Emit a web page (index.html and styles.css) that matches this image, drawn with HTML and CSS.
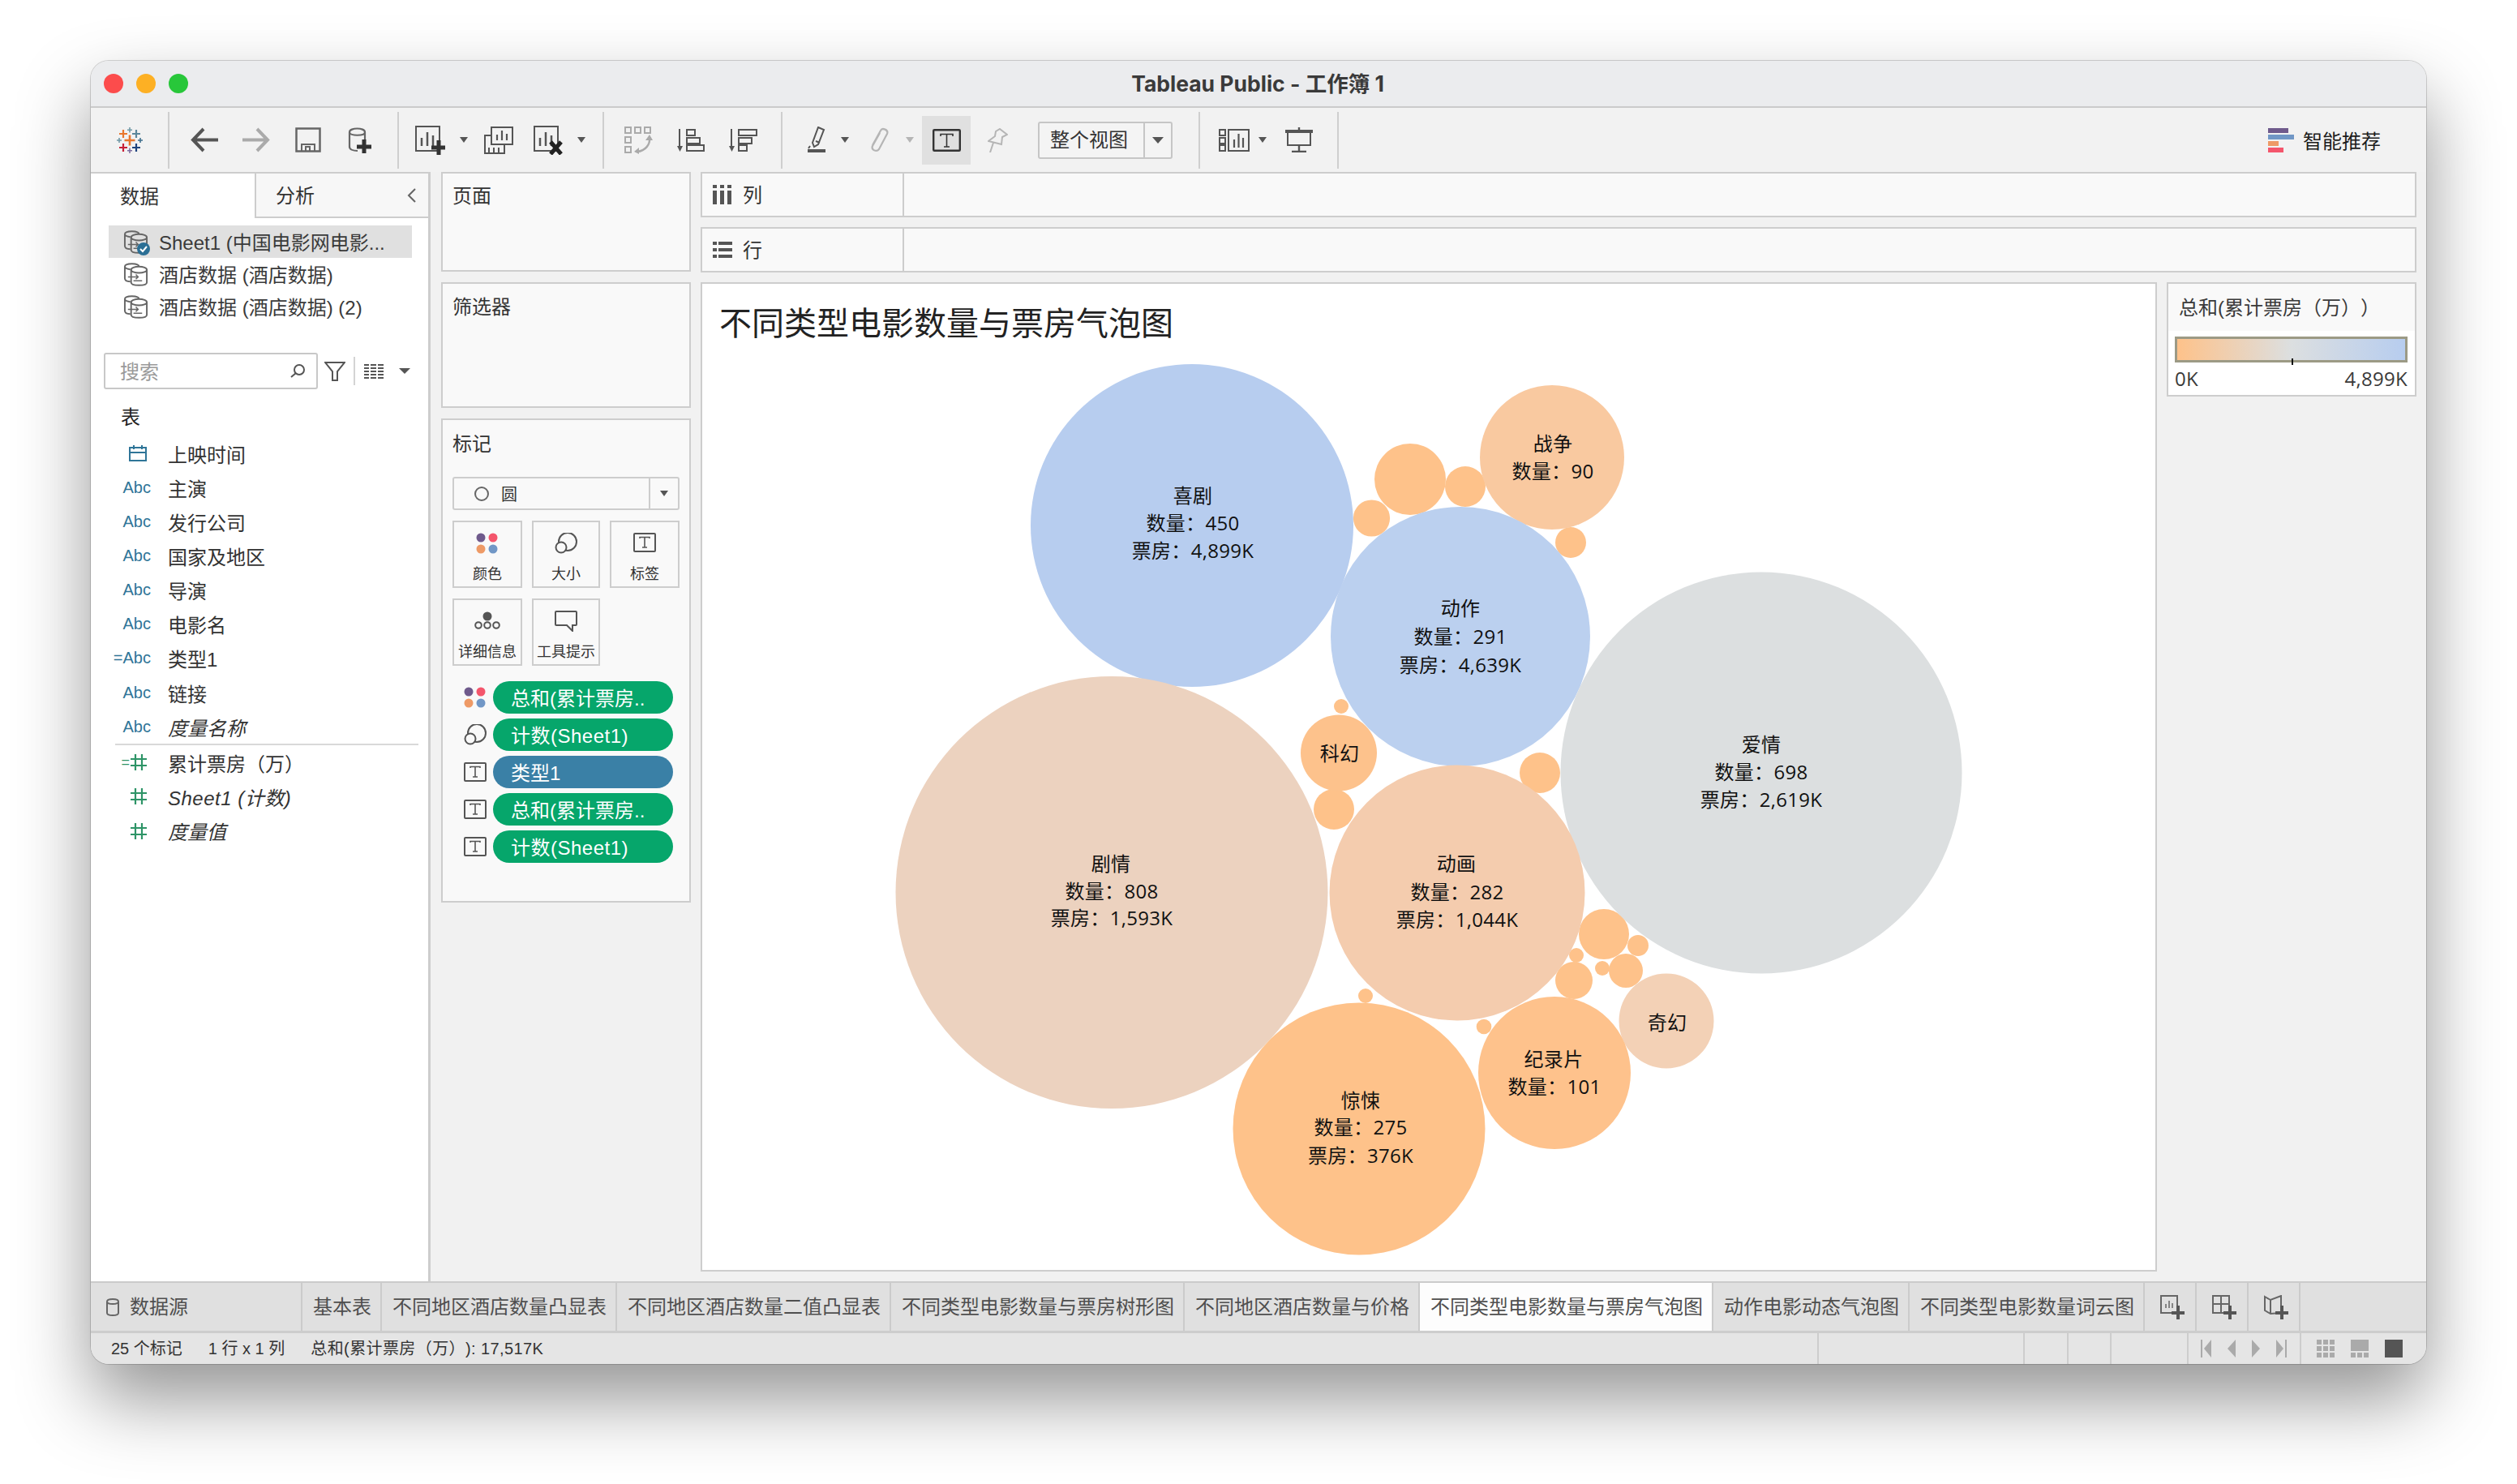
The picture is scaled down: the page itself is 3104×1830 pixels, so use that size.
FILE: index.html
```html
<!DOCTYPE html>
<html lang="zh-CN">
<head>
<meta charset="utf-8">
<title>Tableau Public - 工作簿 1</title>
<link rel="stylesheet" href="styles.css">
</head>
<body>
<svg class="sprite" aria-hidden="true">
  <defs>
    <symbol id="i-dots" viewBox="0 0 28 26">
      <circle cx="6" cy="6" r="5.5" fill="#6f5a8c"/><circle cx="21" cy="6" r="5.5" fill="#f4566c"/>
      <circle cx="6" cy="20" r="5.5" fill="#ee9a66"/><circle cx="21" cy="20" r="5.5" fill="#7197c6"/>
    </symbol>
    <symbol id="i-size" viewBox="0 0 28 26">
      <circle cx="16" cy="11" r="11" fill="none" stroke="#555" stroke-width="2"/>
      <circle cx="8" cy="18" r="6.5" fill="#f9f9f9" stroke="#555" stroke-width="2"/>
    </symbol>
    <symbol id="i-t" viewBox="0 0 28 24">
      <rect x="1" y="1" width="26" height="22" rx="1" fill="none" stroke="#555" stroke-width="2"/>
      <path d="M8 7V5.500H20V7M14 5.500V18M11 18H17" fill="none" stroke="#555" stroke-width="1.600"/>
    </symbol>
    <symbol id="i-db" viewBox="0 0 32 32">
      <path d="M2 6C2 1 20 1 20 6M2 6V21C2 24 5 25 9 25M2 6C2 8 5 9 9 9.500" fill="none" stroke="#666" stroke-width="2"/>
      <ellipse cx="20" cy="10" rx="10" ry="4" fill="none" stroke="#666" stroke-width="2"/>
      <path d="M10 10V26C10 31 30 31 30 26V10" fill="none" stroke="#666" stroke-width="2"/>
      <path d="M6 19H19M16 16L19 19L16 22M24 24H13" fill="none" stroke="#666" stroke-width="1.500"/>
    </symbol>
    <symbol id="i-sheet" viewBox="0 0 37 36">
      <rect x="1" y="1" width="29" height="30" fill="none" stroke="#555" stroke-width="2"/>
      <path d="M8 25V15M15 25V8M22 25V12" stroke="#555" stroke-width="2.500"/>
    </symbol>
    <symbol id="i-hash" viewBox="0 0 20 20">
      <path d="M0 6H20M0 14H20M6 0V20M14 0V20" stroke="#2e9467" stroke-width="2.200"/>
    </symbol>
  </defs>
</svg>

<div class="window">
  <header class="titlebar">
    <div class="lights"><span class="light red"></span><span class="light amber"></span><span class="light green"></span></div>
    <div class="title">Tableau Public - 工作簿 1</div>
    <div></div>
  </header>

  <nav class="toolbar">
    <svg class="m31" width="33" height="32" viewBox="0 0 33 32" fill="none">
      <path d="M17 9.500V22.500M10.500 16H23.500" stroke="#e8762c" stroke-width="2.600"/>
      <path d="M9 3V13M4 8H14" stroke="#e8762c" stroke-width="2.200"/>
      <path d="M25 3V13M20 8H30" stroke="#5b879b" stroke-width="2.200"/>
      <path d="M9 20V30M4 25H14" stroke="#c72037" stroke-width="2.200"/>
      <path d="M25 20V30M20 25H30" stroke="#1f447e" stroke-width="2.200"/>
      <path d="M17 0V6.500M14 3.200H20" stroke="#7199a6" stroke-width="1.600"/>
      <path d="M4 13V19M1 16H7" stroke="#7199a6" stroke-width="1.600"/>
      <path d="M30 13V19M27 16H33" stroke="#3f6f8c" stroke-width="1.600"/>
      <path d="M17 25.500V32M14 28.800H20" stroke="#7e6fa0" stroke-width="1.600"/>
    </svg>
    <span class="sep m31"></span>
    <svg class="m26" width="34" height="31" viewBox="0 0 34 31" fill="none" stroke="#555" stroke-width="4"><path d="M16 2L3 15.500L16 29M3 15.500H34"/></svg>
    <svg class="m30" width="34" height="31" viewBox="0 0 34 31" fill="none" stroke="#aaa" stroke-width="4"><path d="M18 2L31 15.500L18 29M31 15.500H0"/></svg>
    <svg class="m31" width="32" height="31" viewBox="0 0 32 31" fill="none" stroke="#666" stroke-width="2.500"><rect x="1.500" y="1.500" width="29" height="28"/><path d="M8 29V21H24V29M13 29V24H18V29" stroke-width="2"/></svg>
    <svg class="m33" width="29" height="33" viewBox="0 0 29 33" fill="none"><path d="M2 7C2 1 21 1 21 7C21 12 2 12 2 7V25C2 28 6 30 12 30M21 7V17" stroke="#666" stroke-width="2.200"/><path d="M20 16V33M11 25H29" stroke="#333" stroke-width="5"/></svg>
    <span class="sep m32"></span>
    <svg class="m20" width="37" height="36" viewBox="0 0 37 36"><use href="#i-sheet" width="37" height="36"/><path d="M29 18V36M20 27H37" stroke="#333" stroke-width="5"/></svg>
    <span class="caret m18"></span>
    <svg class="m20" width="36" height="34" viewBox="0 0 36 34" fill="none" stroke="#555" stroke-width="2"><rect x="9" y="1" width="26" height="21" fill="#f2f2f2"/><path d="M16 17V10M22 17V5M28 17V9" stroke-width="2.200"/><path d="M9 11H1V33H25V22M6 32V26M12 32V26M18 32V26" /></svg>
    <svg class="m25" width="36" height="36" viewBox="0 0 36 36"><use href="#i-sheet" width="37" height="36"/><path d="M21 20L34 35M34 20L21 35" stroke="#222" stroke-width="5"/></svg>
    <span class="caret m18"></span>
    <span class="sep m21"></span>
    <svg class="m25" width="35" height="34" viewBox="0 0 35 34" fill="none" stroke="#aaa" stroke-width="2"><rect x="1" y="1" width="7" height="7"/><rect x="13" y="1" width="7" height="7"/><rect x="25" y="1" width="7" height="7"/><rect x="1" y="13" width="7" height="7"/><rect x="1" y="25" width="7" height="7"/><path d="M31 14C32 22 26 30 16 31" stroke-width="2.500"/><path d="M26 17L31 10L35 17ZM18 26L12 31L18 34Z" fill="#aaa" stroke="none"/></svg>
    <svg class="m30" width="34" height="28" viewBox="0 0 34 28" fill="none" stroke="#555" stroke-width="2"><path d="M3 0V22" /><path d="M0 21H7L3.500 28Z" fill="#555" stroke="none"/><rect x="12" y="1" width="10" height="7"/><rect x="12" y="11" width="16" height="7"/><rect x="12" y="20" width="21" height="7"/></svg>
    <svg class="m30" width="35" height="28" viewBox="0 0 35 28" fill="none" stroke="#555" stroke-width="2"><path d="M3 0V22"/><path d="M0 21H7L3.500 28Z" fill="#555" stroke="none"/><rect x="12" y="1" width="22" height="7"/><rect x="12" y="11" width="16" height="7"/><rect x="12" y="20" width="10" height="7"/></svg>
    <span class="sep m29"></span>
    <svg class="m31" width="22" height="33" viewBox="0 0 22 33" fill="none" stroke="#555" stroke-width="2"><path d="M13 1L20 4L13 22L8 25L6 20ZM10 18L15 20M3 24L1 27"/><path d="M0 30H22" stroke-width="4"/></svg>
    <span class="caret m19"></span>
    <svg class="m25" width="25" height="31" viewBox="0 0 25 31" fill="none" stroke="#b5b5b5" stroke-width="2.200"><path d="M4 22L14 4C16 0 24 3 22 8L12 27C9 31 2 28 4 23L13 7"/></svg>
    <span class="caret light-caret m20"></span>
    <span class="t-btn m10"><svg width="35" height="28" viewBox="0 0 35 28" fill="none" stroke="#333"><rect x="1.200" y="1.200" width="32.600" height="25.600" rx="1" stroke-width="2.400"/><path d="M10 9V6.500H25V9M17.500 6.500V22M14 22H21" stroke-width="1.600"/></svg></span>
    <svg class="m21" width="25" height="30" viewBox="0 0 25 30" fill="none" stroke="#b5b5b5" stroke-width="2"><path d="M15 1L24 8L18 11L17 20L1 16L9 10L10 4ZM7 18L3 30"/></svg>
    <div class="fit m37"><span class="fit-text">整个视图</span><span class="fit-arrow"><span class="caret big"></span></span></div>
    <span class="sep m32"></span>
    <svg class="m23" width="38" height="28" viewBox="0 0 38 28" fill="none" stroke="#555" stroke-width="2"><rect x="1" y="1" width="7" height="7"/><rect x="1" y="11" width="7" height="7"/><rect x="1" y="20" width="7" height="7"/><rect x="12" y="1" width="25" height="26"/><path d="M19 23V13M24.500 23V6M30 23V11" stroke-width="2.200"/></svg>
    <span class="caret m11"></span>
    <svg class="m23" width="34" height="31" viewBox="0 0 34 31" fill="none" stroke="#555"><path d="M0 5H34" stroke-width="4"/><path d="M3 6V22H31V6" stroke-width="2"/><path d="M17 0V4M17 22V30M8 30H26" stroke-width="2.400"/></svg>
    <span class="sep m30"></span>
    <div class="smart">
      <svg width="32" height="30" viewBox="0 0 32 30"><rect width="25" height="6" fill="#6f5a8c"/><rect y="8" width="32" height="6" fill="#7197c6"/><rect y="16" width="13" height="6" fill="#ee9a66"/><rect y="24" width="19" height="6" fill="#f4566c"/></svg>
      <span>智能推荐</span>
    </div>
  </nav>

  <div class="workspace">
    <aside class="side">
      <div class="side-tabs">
        <div class="side-tab active">数据</div>
        <div class="side-tab">分析<svg class="chev" width="12" height="18" viewBox="0 0 12 18" fill="none" stroke="#666" stroke-width="2"><path d="M10 1L2 9L10 17"/></svg></div>
      </div>
      <ul class="sources">
        <li class="source selected">
          <span class="db-wrap"><svg width="31" height="31"><use href="#i-db" width="31" height="31"/></svg>
          <svg class="badge" width="16" height="16" viewBox="0 0 16 16"><circle cx="8" cy="8" r="8" fill="#2b6f95"/><path d="M4 8L7 11L12 5" fill="none" stroke="#fff" stroke-width="2"/></svg></span>
          <span class="source-text">Sheet1 (中国电影网电影...</span>
        </li>
        <li class="source"><span class="db-wrap"><svg width="31" height="31"><use href="#i-db" width="31" height="31"/></svg></span><span class="source-text">酒店数据 (酒店数据)</span></li>
        <li class="source"><span class="db-wrap"><svg width="31" height="31"><use href="#i-db" width="31" height="31"/></svg></span><span class="source-text">酒店数据 (酒店数据) (2)</span></li>
      </ul>
      <div class="searchrow">
        <div class="search"><span class="search-text">搜索</span><svg width="18" height="17" viewBox="0 0 18 17" fill="none" stroke="#555" stroke-width="2"><circle cx="11" cy="7" r="6"/><path d="M7 11L1 16"/></svg></div>
        <svg class="funnel" width="26" height="24" viewBox="0 0 26 24" fill="none" stroke="#555" stroke-width="2"><path d="M1 1H25L16 12V23H10V12Z"/></svg>
        <span class="mini-sep"></span>
        <svg class="listicon" width="24" height="18" viewBox="0 0 24 18" stroke="#555" stroke-width="1.800"><path d="M0 1H6M8 1H15M17 1H24M0 5H6M8 5H15M17 5H24M0 9H6M8 9H15M17 9H24M0 13H6M8 13H15M17 13H24M0 17H6M8 17H15M17 17H24"/></svg>
        <span class="caret side-caret"></span>
      </div>
      <div class="group-head">表</div>
      <ul class="fields">
        <li class="field"><span class="ficon"><svg class="fsvg" width="22" height="20" viewBox="0 0 22 20" fill="none" stroke="#2f7598" stroke-width="2"><rect x="1" y="3" width="20" height="16"/><path d="M1 9H21M6 0V5M16 0V5" /></svg></span><span>上映时间</span></li>
        <li class="field"><span class="ficon abc">Abc</span><span>主演</span></li>
        <li class="field"><span class="ficon abc">Abc</span><span>发行公司</span></li>
        <li class="field"><span class="ficon abc">Abc</span><span>国家及地区</span></li>
        <li class="field"><span class="ficon abc">Abc</span><span>导演</span></li>
        <li class="field"><span class="ficon abc">Abc</span><span>电影名</span></li>
        <li class="field"><span class="ficon abc">=Abc</span><span>类型1</span></li>
        <li class="field"><span class="ficon abc">Abc</span><span>链接</span></li>
        <li class="field"><span class="ficon abc">Abc</span><em>度量名称</em></li>
      </ul>
      <ul class="fields measures">
        <li class="field"><span class="ficon"><span class="eq">=</span><svg class="fsvg" width="20" height="20"><use href="#i-hash"/></svg></span><span>累计票房（万）</span></li>
        <li class="field"><span class="ficon"><svg class="fsvg" width="20" height="20"><use href="#i-hash"/></svg></span><em class="wide">Sheet1 (计数)</em></li>
        <li class="field"><span class="ficon"><svg class="fsvg" width="20" height="20"><use href="#i-hash"/></svg></span><em>度量值</em></li>
      </ul>
    </aside>

    <div class="cards">
      <section class="card pages"><h3>页面</h3></section>
      <section class="card filters"><h3>筛选器</h3></section>
      <section class="card marks">
        <h3>标记</h3>
        <div class="marktype">
          <span class="marktype-main"><span class="ring"></span>圆</span>
          <span class="marktype-arrow"><span class="caret"></span></span>
        </div>
        <div class="markbtns">
          <div class="markbtn"><svg width="28" height="26"><use href="#i-dots"/></svg><span>颜色</span></div>
          <div class="markbtn"><svg width="28" height="26"><use href="#i-size"/></svg><span>大小</span></div>
          <div class="markbtn"><svg width="28" height="26"><use href="#i-t" height="24"/></svg><span>标签</span></div>
          <div class="markbtn"><svg width="32" height="26" viewBox="0 0 32 26" fill="none" stroke="#555" stroke-width="2"><circle cx="16" cy="7" r="4.500" fill="#555"/><circle cx="5" cy="18" r="3.800"/><circle cx="16" cy="18" r="3.800"/><circle cx="27" cy="18" r="3.800"/></svg><span>详细信息</span></div>
          <div class="markbtn"><svg width="28" height="26" viewBox="0 0 28 26" fill="none" stroke="#555" stroke-width="2"><path d="M2 1H26Q27 1 27 2V17Q27 18 26 18H22V25L15 18H2Q1 18 1 17V2Q1 1 2 1Z"/></svg><span>工具提示</span></div>
        </div>
        <ul class="pills">
          <li class="pillrow"><svg width="28" height="26"><use href="#i-dots"/></svg><span class="pill">总和(累计票房..</span></li>
          <li class="pillrow"><svg width="28" height="26"><use href="#i-size"/></svg><span class="pill wide">计数(Sheet1)</span></li>
          <li class="pillrow"><svg width="28" height="24"><use href="#i-t"/></svg><span class="pill blue">类型1</span></li>
          <li class="pillrow"><svg width="28" height="24"><use href="#i-t"/></svg><span class="pill">总和(累计票房..</span></li>
          <li class="pillrow"><svg width="28" height="24"><use href="#i-t"/></svg><span class="pill wide">计数(Sheet1)</span></li>
        </ul>
      </section>
    </div>

    <main class="main">
      <div class="shelf">
        <div class="shelf-label"><svg width="24" height="24" viewBox="0 0 24 24" fill="#555"><rect x="0" y="0" width="5" height="4"/><rect x="9" y="0" width="5" height="4"/><rect x="18" y="0" width="5" height="4"/><rect x="0" y="7" width="5" height="17"/><rect x="9" y="7" width="5" height="17"/><rect x="18" y="7" width="5" height="17"/></svg><span class="shelf-text">列</span></div>
      </div>
      <div class="shelf">
        <div class="shelf-label"><svg width="24" height="20" viewBox="0 0 24 20" fill="#555"><rect y="0" width="5" height="4"/><rect y="8" width="5" height="4"/><rect y="16" width="5" height="4"/><rect x="7" y="0" width="17" height="4"/><rect x="7" y="8" width="17" height="4"/><rect x="7" y="16" width="17" height="4"/></svg><span class="shelf-text">行</span></div>
      </div>
      <div class="view-row">
        <section class="viz">
          <svg class="chart" viewBox="866 350 1792 1216">
            <text class="chart-title" x="887" y="413">不同类型电影数量与票房气泡图</text>
            <circle cx="1739" cy="591" r="44" fill="#fec28a"/>
            <circle cx="1807" cy="600" r="25" fill="#fec28a"/>
            <circle cx="1691.500" cy="639" r="22.600" fill="#fec28a"/>
            <circle cx="1937" cy="669" r="19" fill="#fec28a"/>
            <circle cx="1654" cy="871" r="9" fill="#fec28a"/>
            <circle cx="1645" cy="998" r="25" fill="#fec28a"/>
            <circle cx="1899" cy="953" r="25" fill="#fec28a"/>
            <circle cx="1978" cy="1152" r="31" fill="#fec28a"/>
            <circle cx="2020" cy="1166" r="13" fill="#fec28a"/>
            <circle cx="2005" cy="1197" r="21" fill="#fec28a"/>
            <circle cx="1976" cy="1194" r="9" fill="#fec28a"/>
            <circle cx="1944" cy="1178" r="9" fill="#fec28a"/>
            <circle cx="1941" cy="1209" r="23" fill="#fec28a"/>
            <circle cx="1830" cy="1266" r="9.300" fill="#fec28a"/>
            <circle cx="1684" cy="1228" r="9" fill="#fec28a"/>
            <circle cx="1470" cy="648" r="199" fill="#b7cdef"/>
            <circle cx="1914" cy="564" r="89" fill="#f9c9a0"/>
            <circle cx="1801" cy="785" r="160" fill="#bbd0ef"/>
            <circle cx="2172" cy="953" r="247.500" fill="#dcdfe0"/>
            <circle cx="1371" cy="1100.500" r="266.500" fill="#ecd2bf"/>
            <circle cx="1797" cy="1101" r="157.500" fill="#f4ccae"/>
            <circle cx="1651" cy="928.500" r="47" fill="#fdc28c"/>
            <circle cx="2055" cy="1259" r="58.500" fill="#f3d1b6"/>
            <circle cx="1917" cy="1323" r="94" fill="#fec28c"/>
            <circle cx="1676" cy="1392" r="155.500" fill="#fec28a"/>
            <g class="labels">
              <text x="1471" y="620">喜剧</text><text x="1471" y="654">数量：450</text><text x="1471" y="688">票房：4,899K</text>
              <text x="1801" y="759">动作</text><text x="1801" y="794">数量：291</text><text x="1801" y="829">票房：4,639K</text>
              <text x="2172" y="927">爱情</text><text x="2172" y="961">数量：698</text><text x="2172" y="995">票房：2,619K</text>
              <text x="1370" y="1074">剧情</text><text x="1371" y="1108">数量：808</text><text x="1371" y="1141">票房：1,593K</text>
              <text x="1796" y="1074">动画</text><text x="1797" y="1109">数量：282</text><text x="1797" y="1143">票房：1,044K</text>
              <text x="1678" y="1366">惊悚</text><text x="1678" y="1399">数量：275</text><text x="1678" y="1434">票房：376K</text>
              <text x="1915" y="556">战争</text><text x="1915" y="590">数量：90</text>
              <text x="1652" y="938">科幻</text>
              <text x="2056" y="1270">奇幻</text>
              <text x="1916" y="1315">纪录片</text><text x="1917" y="1349">数量：101</text>
            </g>
          </svg>
        </section>
        <aside class="legend">
          <div class="legend-head">总和(累计票房（万））</div>
          <div class="legend-body">
            <div class="ramp"></div>
            <div class="ramp-labels"><span>0K</span><span>4,899K</span></div>
          </div>
        </aside>
      </div>
    </main>
  </div>

  <div class="tabs">
    <div class="tab tab-source"><svg width="16" height="24" viewBox="0 0 16 24" fill="none" stroke="#666" stroke-width="2"><path d="M1 5C1 1 15 1 15 5V19C15 23 1 23 1 19ZM1 5C1 9 15 9 15 5"/></svg>数据源</div>
    <div class="tab">基本表</div>
    <div class="tab">不同地区酒店数量凸显表</div>
    <div class="tab">不同地区酒店数量二值凸显表</div>
    <div class="tab">不同类型电影数量与票房树形图</div>
    <div class="tab">不同地区酒店数量与价格</div>
    <div class="tab active">不同类型电影数量与票房气泡图</div>
    <div class="tab">动作电影动态气泡图</div>
    <div class="tab">不同类型电影数量词云图</div>
    <div class="tab tab-icon"><svg width="30" height="30" viewBox="0 0 30 30" fill="none" stroke="#666" stroke-width="2"><rect x="1" y="1" width="20" height="21"/><path d="M7 16V11M11 16V7M15 16V10" stroke-width="1.500"/><path d="M22 13V30M14 22H30" stroke="#555" stroke-width="4"/></svg></div>
    <div class="tab tab-icon"><svg width="30" height="30" viewBox="0 0 30 30" fill="none" stroke="#666" stroke-width="2"><path d="M1 1H21V22H1ZM11 1V22M1 11H21"/><path d="M22 13V30M14 22H30" stroke="#555" stroke-width="4"/></svg></div>
    <div class="tab tab-icon"><svg width="30" height="30" viewBox="0 0 30 30" fill="none" stroke="#666" stroke-width="2"><path d="M1 2L8 6L21 1V22L8 23L1 19ZM8 6V23"/><path d="M22 13V30M14 22H30" stroke="#555" stroke-width="4"/></svg></div>
  </div>

  <footer class="status">
    <span class="st-text">25 个标记</span>
    <span class="st-text">1 行 x 1 列</span>
    <span class="st-text st-sum">总和(累计票房（万）): 17,517K</span>
    <div class="st-cells">
      <span class="st-cell w-254"></span><span class="st-cell w-54"></span><span class="st-cell w-53"></span><span class="st-cell w-95"></span>
      <span class="st-cell st-nav">
        <svg width="13" height="22" viewBox="0 0 13 22" fill="#aaa"><rect width="2" height="22"/><path d="M13 0L4 11L13 22Z"/></svg>
        <svg width="10" height="22" viewBox="0 0 10 22" fill="#aaa"><path d="M10 0L0 11L10 22Z"/></svg>
        <svg width="10" height="22" viewBox="0 0 10 22" fill="#aaa"><path d="M0 0L10 11L0 22Z"/></svg>
        <svg width="13" height="22" viewBox="0 0 13 22" fill="#aaa"><rect x="11" width="2" height="22"/><path d="M0 0L9 11L0 22Z"/></svg>
      </span>
      <span class="st-views">
        <svg width="22" height="22" viewBox="0 0 22 22" fill="#aaa"><rect width="6" height="6"/><rect x="8" width="6" height="6"/><rect x="16" width="6" height="6"/><rect y="8" width="6" height="6"/><rect x="8" y="8" width="6" height="6"/><rect x="16" y="8" width="6" height="6"/><rect y="16" width="6" height="6"/><rect x="8" y="16" width="6" height="6"/><rect x="16" y="16" width="6" height="6"/></svg>
        <svg width="22" height="22" viewBox="0 0 22 22" fill="#aaa"><rect width="22" height="14"/><rect y="16" width="6" height="6"/><rect x="8" y="16" width="6" height="6"/><rect x="16" y="16" width="6" height="6"/></svg>
        <svg width="22" height="22" viewBox="0 0 22 22" fill="#555"><rect width="22" height="22"/></svg>
      </span>
    </div>
  </footer>
</div>
</body>
</html>
```

FILE: styles.css
```css
* { box-sizing: border-box; }
html, body { margin: 0; padding: 0; }
body {
  width: 3104px;
  height: 1830px;
  padding: 75px 112px;
  background: #ffffff;
  overflow: hidden;
  font-family: "Liberation Sans", "Noto Sans CJK SC", sans-serif;
  font-size: 24px;
  color: #333;
  text-spacing-trim: space-all;
}
ul { list-style: none; margin: 0; padding: 0; }
h3 { margin: 0; font-size: 24px; font-weight: 400; line-height: 30px; }
em { font-style: italic; }
.sprite { position: absolute; width: 0; height: 0; }
svg { display: block; flex: none; }
.wide { letter-spacing: .5px; }

.window {
  width: 2880px;
  height: 1607px;
  display: flex;
  flex-direction: column;
  background: #f1f1f1;
  border-radius: 22px;
  overflow: hidden;
  box-shadow: 0 0 0 1px rgba(0,0,0,.16), 0 44px 90px rgba(0,0,0,.42);
}

/* title bar */
.titlebar {
  height: 58px;
  flex: none;
  display: grid;
  grid-template-columns: 1fr auto 1fr;
  align-items: center;
  background: #ebecee;
  border-bottom: 2px solid #cbcbcb;
}
.lights { display: flex; gap: 16px; padding-left: 16px; }
.light { width: 24px; height: 24px; border-radius: 50%; }
.red { background: #fc4c4c; }
.amber { background: #fdb024; }
.green { background: #28c73a; }
.title { padding-right: 2px; font-family: "Inter", "Noto Sans CJK SC", sans-serif; font-size: 26.5px; font-weight: 700; color: #3a3a3a; line-height: 30px; }

/* toolbar */
.toolbar {
  height: 79px;
  flex: none;
  display: flex;
  align-items: center;
  background: #f2f2f2;
  color: #333;
}
.sep { width: 2px; height: 70px; background: #cfcfcf; flex: none; }
.caret { width: 0; height: 0; border-left: 5px solid transparent; border-right: 5px solid transparent; border-top: 7px solid #555; flex: none; }
.caret.light-caret { border-top-color: #b5b5b5; }
.caret.big { border-left-width: 7px; border-right-width: 7px; border-top-width: 8px; }
.m10 { margin-left: 10px; } .m11 { margin-left: 11px; } .m18 { margin-left: 18px; } .m19 { margin-left: 19px; }
.m20 { margin-left: 20px; } .m21 { margin-left: 21px; } .m23 { margin-left: 23px; }
.m25 { margin-left: 25px; } .m26 { margin-left: 26px; } .m29 { margin-left: 29px; }
.m30 { margin-left: 30px; } .m31 { margin-left: 31px; } .m32 { margin-left: 32px; }
.m33 { margin-left: 33px; } .m37 { margin-left: 37px; }
.t-btn { width: 60px; height: 60px; background: #e0e0e0; display: flex; align-items: center; justify-content: center; flex: none; }
.fit {
  width: 166px; height: 46px; flex: none;
  display: flex; align-items: stretch;
  background: #f4f4f4; border: 2px solid #c6c6c6; border-radius: 3px;
}
.fit-text { width: 128px; padding-left: 13px; line-height: 42px; }
.fit-arrow { flex: 1; border-left: 2px solid #c6c6c6; display: flex; align-items: center; justify-content: center; }
.smart { margin-left: auto; margin-right: 56px; display: flex; align-items: center; gap: 11px; color: #1c1c1c; }

/* workspace */
.workspace { flex: 1; min-height: 0; display: flex; }
.side {
  width: 419px; flex: none;
  background: #fff;
  border-top: 2px solid #cdcdcd;
  border-right: 3px solid #cdcdcd;
}
.side-tabs { display: flex; height: 55px; }
.side-tab { display: flex; align-items: center; padding-bottom: 3px; }
.side-tab.active { width: 202px; padding-left: 36px; }
.side-tab:not(.active) {
  flex: 1; position: relative; padding-left: 24px;
  background: #f7f7f7;
  border-left: 2px solid #cdcdcd;
  border-bottom: 2px solid #cdcdcd;
}
.chev { position: absolute; right: 14px; top: 18px; }
.sources { padding: 9px 20px 0 22px; }
.source { height: 40px; display: flex; align-items: center; color: #3a3a3a; }
.source.selected { background: #e0e0e0; }
.source-text { padding-bottom: 2px; }
.db-wrap { width: 62px; padding-left: 18px; position: relative; flex: none; }
.badge { position: absolute; left: 35px; top: 16px; }
.searchrow { display: flex; align-items: center; height: 45px; margin: 37px 0 0 16px; }
.search {
  width: 264px; height: 45px;
  display: flex; align-items: center; justify-content: space-between;
  padding: 0 14px 0 18px;
  border: 2px solid #c8c8c8; border-radius: 3px;
  color: #9a9a9a;
}
.search-text { padding-bottom: 3px; }
.funnel { margin-left: 8px; }
.mini-sep { width: 2px; height: 35px; background: #d4d4d4; margin-left: 10px; }
.listicon { margin-left: 11px; }
.side-caret { margin-left: 19px; border-left-width: 7px; border-right-width: 7px; }
.group-head { height: 52px; padding: 0 0 2px 37px; display: flex; align-items: flex-end; color: #222; line-height: 30px; }
.fields { margin-top: 6px; }
.fields.measures { margin: 0 12px 0 30px; border-top: 2px solid #d9d9d9; }
.field { height: 42.15px; display: flex; align-items: center; color: #333; }
.measures .ficon { margin-left: -30px; }
.ficon { width: 95px; padding-right: 21px; display: flex; justify-content: flex-end; align-items: center; flex: none; }
.abc { font-size: 20px; color: #2f7598; }
.fsvg { margin-right: 5px; }
.eq { color: #2e9467; font-size: 18px; margin-right: 1px; }

/* cards */
.cards { width: 308px; flex: none; margin-left: 13px; display: flex; flex-direction: column; gap: 13px; }
.card { background: #f9f9f9; border: 2px solid #cdcdcd; padding: 0 12px; flex: none; }
.card h3 { color: #333; }
.pages { height: 123px; padding-top: 13px; }
.filters { height: 155px; padding-top: 14px; }
.marks { height: 597px; padding-top: 15px; }
.marktype {
  height: 41px; margin-top: 25px;
  display: flex; align-items: stretch;
  border: 2px solid #cdcdcd; border-radius: 3px;
}
.marktype-main { flex: 1; display: flex; align-items: center; gap: 15px; padding-left: 25px; font-size: 20px; }
.ring { width: 18px; height: 18px; border: 2px solid #666; border-radius: 50%; }
.marktype-arrow { width: 36px; border-left: 2px solid #cdcdcd; display: flex; align-items: center; justify-content: center; }
.markbtns { display: grid; grid-template-columns: 86px 84px 86px; gap: 13px 12px; margin-top: 13px; }
.markbtn {
  height: 83px;
  display: flex; flex-direction: column; align-items: center;
  gap: 13px; padding-top: 13px;
  border: 2px solid #cdcdcd;
  font-size: 18px; line-height: 24px; color: #333;
}
.pills { margin-top: 19px; display: flex; flex-direction: column; gap: 6px; }
.pillrow { display: flex; align-items: center; gap: 8px; padding-left: 14px; }
.pill {
  width: 222px; height: 40px;
  display: flex; align-items: center; padding: 0 0 2px 22px;
  border-radius: 20px;
  background: #06a66b; color: #fff;
}
.pill.blue { background: #3a80a6; }

/* main */
.main { flex: 1; min-width: 0; margin: 0 12px 12px; display: flex; flex-direction: column; gap: 12px; }
.shelf { height: 56px; flex: none; background: #f9f9f9; border: 2px solid #cdcdcd; }
.shelf-label {
  width: 249px; height: 100%;
  display: flex; align-items: center; gap: 13px;
  padding-left: 13px;
  border-right: 2px solid #cdcdcd;
}
.shelf-text { padding-bottom: 3px; }
.view-row { flex: 1; min-height: 0; display: flex; gap: 12px; align-items: flex-start; }
.viz { flex: 1; height: 100%; background: #fff; border: 2px solid #cdcdcd; }
.chart { width: 100%; height: 100%; font-family: "Open Sans", "Noto Sans CJK SC", sans-serif; }
.chart-title { font-size: 40px; fill: #222; }
.labels text { font-size: 24px; fill: #111; text-anchor: middle; letter-spacing: .3px; }
.legend { width: 308px; height: 141px; flex: none; background: #fff; border: 2px solid #cdcdcd; font-family: "Open Sans", "Noto Sans CJK SC", sans-serif; color: #3a3a3a; }
.legend-head { height: 58px; padding: 0 0 3px 13px; display: flex; align-items: center; background: #f9f9f9; font-family: "Liberation Sans", "Noto Sans CJK SC", sans-serif; }
.legend-body { padding: 7px 9px 0 8px; }
.ramp {
  height: 32px; position: relative;
  border: 3px solid #9c9a85;
  background: linear-gradient(90deg, #fec28a, #dcdfe0 50%, #b7cdef);
}
.ramp::after { content: ""; position: absolute; left: 50%; bottom: -6px; width: 2px; height: 8px; background: #111; }
.ramp-labels { display: flex; justify-content: space-between; margin-top: 3px; line-height: 34px; letter-spacing: .3px; }

/* tabs */
.tabs { height: 61px; flex: none; display: flex; background: #e0e0e0; border-top: 2px solid #cbcbcb; }
.tab {
  height: 100%; flex: none;
  padding: 0 11px 0 13px; display: flex; align-items: center;
  border-right: 2px solid #cbcbcb;
  color: #4f4f4f;
  line-height: 30px;
}
.tab.active { background: #fdfdfd; }
.tab-source { width: 261px; gap: 13px; padding-left: 19px; }
.tab-icon { width: 64px; padding: 0 0 0 19px; }

/* status */
.status {
  height: 41px; flex: none;
  display: flex; align-items: center;
  padding-left: 25px; gap: 32px;
  background: #e5e5e5;
  border-top: 3px solid #cdcdcd;
  font-size: 20px; color: #333;
}
.st-text { padding-bottom: 3px; }
.st-sum { letter-spacing: .4px; }
.st-cells { margin-left: auto; display: flex; height: 100%; align-items: stretch; padding-right: 154px; position: relative; }
.st-cell { border-left: 2px solid #cdcdcd; }
.w-254 { width: 254px; } .w-54 { width: 54px; } .w-53 { width: 53px; } .w-95 { width: 95px; }
.st-nav { width: 141px; display: flex; align-items: center; gap: 20px; padding-left: 15px; border-right: 2px solid #cdcdcd; }
.st-views { position: absolute; right: 29px; top: 0; bottom: 0; display: flex; align-items: center; gap: 20px; }
```
